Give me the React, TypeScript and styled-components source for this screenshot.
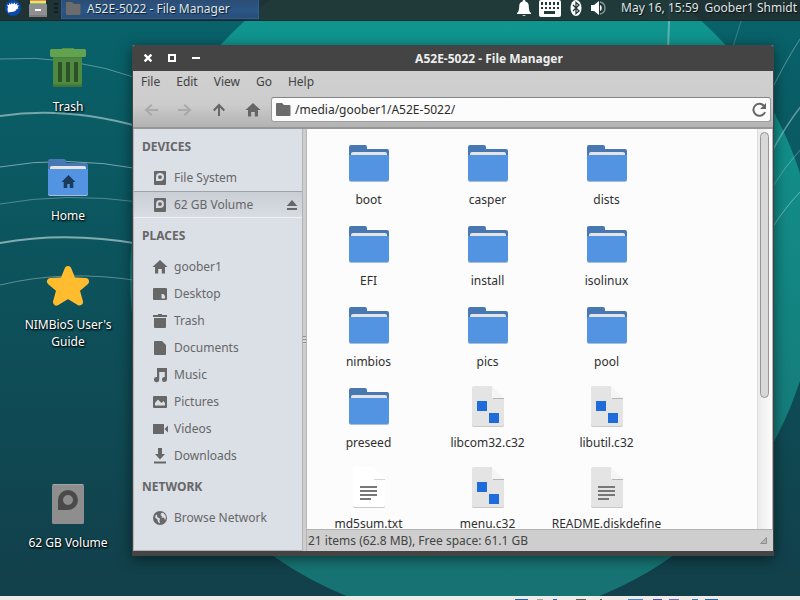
import React from "react";
import styled, { createGlobalStyle, css } from "styled-components";

const GlobalStyle = createGlobalStyle`
  * { box-sizing: border-box; }
  html, body, #root { height: 100%; }
  body {
    margin: 0;
    overflow: hidden;
    font: 12px/17px "Noto Sans", "Open Sans", sans-serif;
    color: #2f2f2f;
  }
  button, input {
    font: inherit;
    color: inherit;
    background: none;
    border: 0;
    padding: 0;
    margin: 0;
  }
  svg { display: block; flex: none; }
`;

const Screen = styled.div`
  position: relative;
  isolation: isolate;
  display: flex;
  flex-direction: column;
  height: 100vh;
  overflow: hidden;
`;

const WallpaperSvg = styled.svg`
  position: absolute;
  inset: 0;
  width: 100%;
  height: 100%;
  z-index: -1;
`;

/* ---------- top panel ---------- */

const Panel = styled.header`
  flex: none;
  display: flex;
  align-items: flex-start;
  height: 21px;
  padding: 0 3px 0 5px;
  background: rgba(36, 40, 42, 0.84);
  border-bottom: 1px solid rgba(20, 38, 42, 0.6);
  color: #dfe5e6;
  text-shadow: 1px 1px 1px rgba(0, 0, 0, 0.7);
`;

const PanelButton = styled.button`
  display: flex;
  margin-right: 8px;
`;

const PanelHandle = styled.span`
  width: 4px;
  height: 12px;
  margin: 3px 3px 0 -1px;
  background: repeating-linear-gradient(#141f22 0 2px, transparent 2px 4px);
`;

const TaskButton = styled.button`
  display: flex;
  align-items: center;
  gap: 6px;
  width: 198px;
  height: 19px;
  padding: 0 4px 2px;
  border: 1px solid #2e5c9c;
  border-top: 0;
  background: linear-gradient(#2c4d74, #2b5686 60%, #2a4e78);
  text-shadow: inherit;
`;

const Tray = styled.div`
  display: flex;
  gap: 8px;
  margin-left: auto;
  margin-right: 13px;
`;

const Clock = styled.time`
  margin-right: 6px;
  line-height: 15px;
`;

const UserName = styled.span`
  line-height: 15px;
`;

/* ---------- desktop ---------- */

const Desktop = styled.main`
  flex: 1;
  min-height: 0;
  display: grid;
  grid-template-columns: 132px minmax(0, 1fr);
  grid-template-rows: minmax(0, 1fr);
  padding: 24px 26px 40px 0;
`;

const DesktopIcons = styled.nav`
  display: grid;
  grid-auto-rows: 109px;
  align-content: start;
  margin-right: -4px;
`;

const DesktopIcon = styled.button<{ $row: number }>`
  grid-row: ${(p) => p.$row};
  display: flex;
  flex-direction: column;
  align-items: center;
  justify-content: flex-start;
  gap: 8px;
  padding: 1px 18px 0;
  color: #fff;
  text-shadow: 1px 1px 2px #000, 0 1px 2px rgba(0, 0, 0, 0.7);
`;

/* ---------- window ---------- */

const Window = styled.section`
  display: flex;
  flex-direction: column;
  min-height: 0;
  background: #cecece;
  border: 1px solid #444;
  border-width: 0 1px 5px;
  border-radius: 2px 2px 0 0;
  box-shadow: 0 3px 14px rgba(0, 0, 0, 0.5);
`;

const TitleBar = styled.header`
  flex: none;
  display: flex;
  align-items: center;
  height: 26px;
  padding-left: 3px;
  background: #444;
  border-radius: 2px 2px 0 0;
  color: #eee;
`;

const TitleButton = styled.button`
  display: flex;
  align-items: center;
  justify-content: center;
  width: 24px;
  height: 24px;
`;

const Title = styled.h1`
  flex: 1;
  margin: 0;
  padding-right: 3px;
  font-size: 12px;
  line-height: 17px;
  font-weight: 700;
  text-align: center;
`;

const Chrome = styled.div`
  flex: none;
  background: linear-gradient(#d0d0d0, #cccccc 60%, #b2b2b2);
  border-bottom: 2px solid #969696;
`;

const MenuBar = styled.nav`
  display: flex;
  height: 21px;
  color: #424242;
`;

const MenuItem = styled.button`
  padding: 0 8px;
`;

const ToolBar = styled.div`
  display: flex;
  align-items: center;
  height: 35px;
  padding: 0 2px 0 1px;
`;

const ToolButton = styled.button`
  display: flex;
  align-items: center;
  justify-content: center;
  width: 34px;
  height: 27px;
  color: #666;
  &:disabled { color: #a9a9a9; }
`;

const Location = styled.label`
  flex: 1;
  display: flex;
  align-items: center;
  gap: 4px;
  height: 25px;
  padding: 0 2px 0 4px;
  margin-left: 1px;
  border: 1px solid #9b9b9b;
  border-top-color: #858585;
  border-radius: 3px;
  background: #fcfcfc;
  color: #666;
  input {
    flex: 1;
    min-width: 0;
    color: #2c2c2c;
    outline: none;
  }
`;

const Body = styled.div`
  flex: 1;
  min-height: 0;
  display: flex;
`;

const Sidebar = styled.aside`
  flex: none;
  width: 170px;
  background: #dbdfe6;
  border: 1px solid #b0b2b5;
  border-top: 0;
  color: #676767;
  overflow: hidden;
`;

const SideHeading = styled.h2`
  margin: 0;
  padding: 0 8px;
  font-size: 12px;
  line-height: 35px;
  font-weight: 700;
`;

const SideList = styled.ul`
  margin: 0;
  padding: 0;
  list-style: none;
`;

const SideRow = styled.li<{ $selected?: boolean }>`
  display: flex;
  align-items: center;
  height: 27px;
  padding: 0 2px 0 18px;
  ${(p) =>
    p.$selected &&
    css`
      background: linear-gradient(#c9cdd4, #d8dce3);
      box-shadow: inset 0 1px #a0a3a8, inset 0 -1px #eef0f4;
    `}
`;

const SideButton = styled.button`
  flex: 1;
  display: flex;
  align-items: center;
  gap: 6px;
  text-align: left;
`;

const Splitter = styled.div`
  flex: none;
  display: flex;
  align-items: center;
  width: 4px;
  border-right: 1px solid #b5b5b5;
  span {
    width: 4px;
    height: 8px;
    background: repeating-linear-gradient(#909090 0 1px, #dadada 1px 3px);
  }
`;

const Content = styled.div`
  flex: 1;
  min-width: 0;
  display: flex;
  flex-direction: column;
`;

const Scroller = styled.div`
  flex: 1;
  min-height: 0;
  display: flex;
  background: #fcfcfc;
  border: 1px solid #b2b2b2;
  border-width: 0 1px 1px 0;
`;

const FileGrid = styled.div`
  flex: 1;
  display: grid;
  grid-template-columns: repeat(auto-fill, 119px);
  grid-auto-rows: 65px;
  row-gap: 16px;
  padding: 14px 0 0 2px;
  overflow: hidden;
`;

const FileItem = styled.button`
  display: flex;
  flex-direction: column;
  align-items: center;
  gap: 6px;
  white-space: nowrap;
`;

const Track = styled.div`
  flex: none;
  width: 15px;
  padding: 3px 3px 0 2px;
  border-left: 1px solid #dcdcdc;
  background: linear-gradient(90deg, #ebebeb, #fcfcfc);
`;

const Thumb = styled.div`
  height: 67%;
  border: 1px solid #969696;
  border-radius: 5px;
  background: #d8d8d8;
`;

const StatusBar = styled.footer`
  flex: none;
  display: flex;
  align-items: center;
  justify-content: space-between;
  height: 21px;
  padding: 0 6px 0 1px;
  color: #444;
`;

/* ---------- bottom strip ---------- */

const Strip = styled.footer`
  flex: none;
  display: flex;
  align-items: flex-end;
  justify-content: flex-end;
  height: 4px;
  padding-right: 82px;
  background: #efebe7;
`;

const StripMark = styled.span<{ $gap: number; $w: number; $c: string }>`
  margin-left: ${(p) => p.$gap}px;
  width: ${(p) => p.$w}px;
  height: 1px;
  background: ${(p) => p.$c};
`;

/* ---------- drawings ---------- */

const Wallpaper = () => (
  <WallpaperSvg viewBox="0 0 800 600" preserveAspectRatio="xMidYMid slice" aria-hidden="true">
    <defs>
      <linearGradient id="sea" x1="0" y1="0" x2="0" y2="1">
        <stop offset="0" stopColor="#08636b" />
        <stop offset="1" stopColor="#123f4a" />
      </linearGradient>
      <linearGradient id="disc" gradientUnits="userSpaceOnUse" x1="0" y1="0" x2="0" y2="600">
        <stop offset="0" stopColor="#109690" />
        <stop offset="1" stopColor="#177272" />
      </linearGradient>
    </defs>
    <rect width="800" height="600" fill="url(#sea)" />
    <circle cx="473" cy="277" r="343" fill="url(#disc)" />
    <g fill="none" stroke="#cfe6e6">
      <path d="M0 59Q70 54 140 79" opacity=".4" />
      <path d="M0 116Q66 106 140 127" strokeWidth="2" opacity=".55" />
      <path d="M0 167Q66 155 140 169" opacity=".55" />
      <path d="M0 204Q66 192 140 202" opacity=".35" />
      <path d="M0 243Q66 231 140 244" strokeWidth="2" opacity=".6" />
      <path d="M0 285Q66 269 140 281" opacity=".4" />
      <path d="M670 0Q669 22 668 50" strokeWidth="2" opacity=".4" />
      <path d="M749 0Q740 22 732 50" opacity=".25" />
      <path d="M802 36Q786 60 770 93" opacity=".4" />
      <path d="M802 105Q786 125 770 155" strokeWidth="1.5" opacity=".45" />
      <path d="M802 148Q786 165 770 191" opacity=".35" />
      <path d="M802 190Q786 206 770 231" opacity=".45" />
    </g>
  </WallpaperSvg>
);

const MouseLogo = () => (
  <svg width="16" height="17" viewBox="0 0 16 17">
    <circle cx="8" cy="8" r="8" fill="#0a49a8" />
    <path
      fill="#fff"
      d="M3 12.500L2.500 9 3 7 2 4.500l2 .8L4.300 3l1.600 1.600L6.800 2.500l1.200 2L9.500 2.300l.7 2.200L12.500 3l-.5 2.200 2 .3-1.200 1.700.6 1.300-1.600.6C11 11 9 12 6 12z"
    />
  </svg>
);

const CabinetIcon = () => (
  <svg width="18" height="17" viewBox="0 0 18 17">
    <path fill="#e88b52" d="M1 0h16v1H1z" />
    <path fill="#f5de6c" d="M1 1h16v2H1z" />
    <path fill="#7cc576" d="M1 3h16v2H1z" />
    <rect y="4" width="18" height="13" rx="1" fill="#8f8f8f" />
    <path fill="#7d7d7d" d="M0 15h18v2H0z" />
    <rect x="6" y="9" width="6" height="2" fill="#fff" />
  </svg>
);

const SmallFolder = () => (
  <svg width="15" height="13" viewBox="0 0 15 13" fill="#6c6c6c">
    <path d="M1 0h5l2 2h5.500a1 1 0 0 1 1 1v9a1 1 0 0 1-1 1H1a1 1 0 0 1-1-1V1a1 1 0 0 1 1-1z" />
  </svg>
);

const BellIcon = () => (
  <svg width="14" height="17" viewBox="2 0 14 17" fill="#fff">
    <path d="M9 0c1 0 1.500.6 1.500 1.400C13 2 13.800 4 13.800 6.500c0 4 1 5.500 2.200 6.500v1H2v-1c1.200-1 2.200-2.500 2.200-6.500C4.200 4 5 2 7.500 1.400 7.500.6 8 0 9 0zM7 15h4l-2 1z" />
  </svg>
);

const KeyboardIcon = () => (
  <svg width="22" height="17" viewBox="0 0 22 17">
    <rect width="22" height="17" rx="2" fill="#fff" />
    <g fill="#203a3c">
      {[0, 1, 2, 3, 4].map((c) => (
        <path key={c} d={`M${2 + c * 4} 2h2v3h-2zM${2 + c * 4} 7h2v2h-2z`} />
      ))}
      <path d="M5 11h11v3H5z" />
    </g>
  </svg>
);

const BluetoothIcon = () => (
  <svg width="14" height="17" viewBox="5 0 14 17">
    <ellipse cx="12" cy="8" rx="5.500" ry="8" fill="#fff" />
    <path d="M9 5l6 6-3 2.500v-11L15 5l-6 6" fill="none" stroke="#203a3c" strokeWidth="1.300" />
  </svg>
);

const VolumeIcon = () => (
  <svg width="17" height="17" viewBox="0 0 17 17">
    <path fill="#fff" d="M0 5h3l5-4v14l-5-4H0zM9 5c2.300.6 2.300 5.400 0 6z" />
    <path d="M9 2q5 1 5 6t-5 6" fill="none" stroke="#829395" strokeWidth="1.400" />
  </svg>
);

const TrashCan = () => (
  <svg width="40" height="44" viewBox="1 0 40 44">
    <path d="M6 10h29v29a2 2 0 0 1-2 2H8a2 2 0 0 1-2-2z" fill="#4f8a41" />
    <path d="M6 11h29" stroke="#447838" />
    <path d="M6 38.500h29V40a1 1 0 0 1-1 1H7a1 1 0 0 1-1-1z" fill="#41733a" />
    <path d="M15 2h12v2H15z" fill="#558b47" />
    <rect x="3" y="3" width="36" height="8" rx="1.500" fill="#62a352" />
    <g fill="#2d5026">
      <rect x="11" y="16" width="4" height="20" rx="1" />
      <rect x="19" y="16" width="4" height="20" rx="1" />
      <rect x="27" y="16" width="4" height="20" rx="1" />
    </g>
  </svg>
);

const FolderIcon = ({ home }: { home?: boolean }) => (
  <svg width="40" height={home ? 44 : 42} viewBox={home ? "0 -2 40 44" : "0 0 40 42"}>
    <path d="M0 4a2 2 0 0 1 2-2h14a2 2 0 0 1 2 2v2h20a2 2 0 0 1 2 2v12H0z" fill="#4878b4" />
    <path d="M2 13v-2a2 2 0 0 1 2-2h32a2 2 0 0 1 2 2v2z" fill="#e4e4e4" />
    <path d="M0 12h40v25a2 2 0 0 1-2 2H2a2 2 0 0 1-2-2z" fill="#a7bcd8" />
    <path d="M0 12h40v24a2 2 0 0 1-2 2H2a2 2 0 0 1-2-2z" fill="#5294e2" />
    {home && <path fill="#1c3a5c" d="M20.500 18l7 7h-2.200v6h-3.500v-4h-2.600v4h-3.500v-6h-2.200z" />}
  </svg>
);

const StarIcon = () => (
  <svg width="44" height="44" viewBox="0 0 44 44">
    <path
      fill="#ffbc2f"
      stroke="#ffbc2f"
      strokeWidth="7"
      strokeLinejoin="round"
      d="M22 5.500l4.500 11.300 13 .7-9.500 8 3.500 12.500L22 31l-11.500 7L14 25.500l-9.500-8 13-.7z"
    />
  </svg>
);

const DriveIcon = () => (
  <svg width="32" height="44" viewBox="0 0 32 44">
    <rect y="2" width="32" height="40" rx="1.500" fill="#8e8e8e" />
    <path d="M1 2.500h30" stroke="#a4a4a4" />
    <path
      fill="#4a4a4a"
      fillRule="evenodd"
      d="M16 8a10 10 0 0 1 0 20H6V18A10 10 0 0 1 16 8zm0 5a5 5 0 1 0 0 10 5 5 0 0 0 0-10z"
    />
  </svg>
);

const DocumentIcon = ({ kind }: { kind: "binary" | "text" | "data" }) => (
  <svg width="32" height="42" viewBox="0 0 32 42">
    <path d="M2 1h18v12h12v26a2 2 0 0 1-2 2H2a2 2 0 0 1-2-2V3a2 2 0 0 1 2-2z" fill="#c9c9c9" />
    <path
      d="M2 0h18v12h12v26a2 2 0 0 1-2 2H2a2 2 0 0 1-2-2V2a2 2 0 0 1 2-2z"
      fill={kind === "text" ? "#fff" : "#e4e4e4"}
    />
    <path d="M20 0l12 12H20z" fill={kind === "text" ? "#fff" : "#f5f5f5"} />
    <path d="M21 12.500h11" stroke={kind === "text" ? "#d6d6d6" : "#b4b4b4"} />
    {kind === "binary" ? (
      <path fill="#1e6bdc" d="M5 15h10v10H5zM17 27h10v10H17z" />
    ) : (
      <path fill="#77777a" d="M7 19h17v2H7zM7 23h17v2H7zM7 27h17v2H7zM7 31h11v2H7z" />
    )}
  </svg>
);

const glyphs = {
  back: "M8 2l1.500 1.500L5.500 7H15v2H5.500l4 3.500L8 14 1.500 8z",
  forward: "M8 2L6.500 3.500l4 3.500H1v2h9.500l-4 3.500L8 14l6.500-6z",
  up: "M8 1.500l6 6.300-1.500 1.400L9 5.800V14H7V5.800L3.500 9.200 2 7.800z",
  house: "M8 1l7.500 7H13v6.500H9.800V10H6.200v4.500H3V8H.5z",
  drive:
    "M3 1h10a1 1 0 0 1 1 1v12a1 1 0 0 1-1 1H3a1 1 0 0 1-1-1V2a1 1 0 0 1 1-1zm5 2a4 4 0 0 0-4 4v4h4a4 4 0 0 0 0-8zm0 2.200a1.900 1.900 0 1 1 0 3.800 1.900 1.900 0 0 1 0-3.800z",
  desktop:
    "M2 2h12a1 1 0 0 1 1 1v10a1 1 0 0 1-1 1H2a1 1 0 0 1-1-1V3a1 1 0 0 1 1-1zm7.500 6v4.500H13V10l-1.500-2z",
  trash: "M6 1h4v1h5v2H1V2h5zM2 5h12v9a1 1 0 0 1-1 1H3a1 1 0 0 1-1-1z",
  document: "M3 1h7l4 4v9a1 1 0 0 1-1 1H3a1 1 0 0 1-1-1V2a1 1 0 0 1 1-1z",
  music: "M5 1h10v11.500A2.500 2.500 0 1 1 12.800 10V5H7.200v7.500A2.600 2.600 0 1 1 5 10z",
  picture:
    "M2 2h12a1 1 0 0 1 1 1v10a1 1 0 0 1-1 1H2a1 1 0 0 1-1-1V3a1 1 0 0 1 1-1zm1 9.500h10V9.200L11.500 7 9.500 9 6 5.500 3 9z",
  video: "M1.500 3h10a.5.5 0 0 1 .5.5v9a.5.5 0 0 1-.5.5h-10a.5.5 0 0 1-.5-.5v-9a.5.5 0 0 1 .5-.5zM16 4.500v7L12.500 8z",
  download: "M6 0h4v6h3l-5 5.500L3 6h3zM2 13.500h12v2H2z",
  globe:
    "M8 1a7 7 0 1 1 0 14A7 7 0 0 1 8 1zM4 4.500l1.500 1L5 7l3 1.500-.5 2 .5 3-2-1.500-.5-2.500L3 7.500zM9.500 2.700L8.500 5l1.700 1.500L9.500 8l2.500-.5 1 2.500 1-2-.5-2.500-2-2.500z",
  eject: "M8 3l5.300 6H2.700zM3 11h10v2H3z",
};

type GlyphName = keyof typeof glyphs;

const Glyph = ({ name }: { name: GlyphName }) => (
  <svg width="16" height="16" viewBox="0 0 16 16" fill="currentColor" fillRule="evenodd" aria-hidden="true">
    <path d={glyphs[name]} />
  </svg>
);

const ReloadIcon = () => (
  <svg width="18" height="18" viewBox="0 0 18 18">
    <path d="M14.400 5.500A6 6 0 1 0 15 11" fill="none" stroke="#666" strokeWidth="2" />
    <path d="M16 2v6h-6z" fill="#666" />
  </svg>
);

/* ---------- data ---------- */

const places: { heading: string; rows: { icon: GlyphName; label: string; mounted?: boolean }[] }[] = [
  {
    heading: "DEVICES",
    rows: [
      { icon: "drive", label: "File System" },
      { icon: "drive", label: "62 GB Volume", mounted: true },
    ],
  },
  {
    heading: "PLACES",
    rows: [
      { icon: "house", label: "goober1" },
      { icon: "desktop", label: "Desktop" },
      { icon: "trash", label: "Trash" },
      { icon: "document", label: "Documents" },
      { icon: "music", label: "Music" },
      { icon: "picture", label: "Pictures" },
      { icon: "video", label: "Videos" },
      { icon: "download", label: "Downloads" },
    ],
  },
  { heading: "NETWORK", rows: [{ icon: "globe", label: "Browse Network" }] },
];

const folder = <FolderIcon />;
const binary = <DocumentIcon kind="binary" />;

const files: [string, React.ReactNode][] = [
  ["boot", folder],
  ["casper", folder],
  ["dists", folder],
  ["EFI", folder],
  ["install", folder],
  ["isolinux", folder],
  ["nimbios", folder],
  ["pics", folder],
  ["pool", folder],
  ["preseed", folder],
  ["libcom32.c32", binary],
  ["libutil.c32", binary],
  ["md5sum.txt", <DocumentIcon kind="text" />],
  ["menu.c32", binary],
  ["README.diskdefine", <DocumentIcon kind="data" />],
];

const marks: [number, number, string][] = [
  [0, 13, "#1c66b8"],
  [9, 6, "#a9a6a3"],
  [10, 4, "#1c66b8"],
  [19, 10, "#5e5e5e"],
  [14, 2, "#5e5e5e"],
  [26, 15, "#4a86d8"],
  [10, 9, "#4a50b0"],
  [7, 10, "#7a68b0"],
  [13, 6, "#3878c0"],
  [7, 13, "#1c66b8"],
];

export default function App() {
  return (
    <Screen>
      <GlobalStyle />
      <Wallpaper />
      <Panel>
        <PanelButton aria-label="Applications"><MouseLogo /></PanelButton>
        <PanelButton aria-label="Files"><CabinetIcon /></PanelButton>
        <PanelHandle />
        <TaskButton><SmallFolder />A52E-5022 - File Manager</TaskButton>
        <Tray>
          <BellIcon />
          <KeyboardIcon />
          <BluetoothIcon />
          <VolumeIcon />
        </Tray>
        <Clock>May 16, 15:59</Clock>
        <UserName>Goober1 Shmidt</UserName>
      </Panel>
      <Desktop>
        <DesktopIcons aria-label="Desktop">
          <DesktopIcon $row={1}><TrashCan />Trash</DesktopIcon>
          <DesktopIcon $row={2}><FolderIcon home />Home</DesktopIcon>
          <DesktopIcon $row={3}><StarIcon />NIMBioS User's Guide</DesktopIcon>
          <DesktopIcon $row={5}><DriveIcon />62 GB Volume</DesktopIcon>
        </DesktopIcons>
        <Window>
          <TitleBar>
            <TitleButton aria-label="Close">
              <svg width="8" height="8" viewBox="0 0 8 8"><path d="M.6.6l6.800 6.800M7.400.6L.6 7.400" stroke="#fff" strokeWidth="2.400" /></svg>
            </TitleButton>
            <TitleButton aria-label="Maximize">
              <svg width="8" height="8" viewBox="0 0 8 8"><path d="M1 1h6v6H1z" fill="none" stroke="#fff" strokeWidth="2" /></svg>
            </TitleButton>
            <TitleButton aria-label="Minimize">
              <svg width="8" height="8" viewBox="0 0 8 8"><path d="M0 3h8v2H0z" fill="#fff" /></svg>
            </TitleButton>
            <Title>A52E-5022 - File Manager</Title>
          </TitleBar>
          <Chrome>
            <MenuBar>
              {["File", "Edit", "View", "Go", "Help"].map((m) => (
                <MenuItem key={m}>{m}</MenuItem>
              ))}
            </MenuBar>
            <ToolBar>
              <ToolButton disabled aria-label="Back"><Glyph name="back" /></ToolButton>
              <ToolButton disabled aria-label="Forward"><Glyph name="forward" /></ToolButton>
              <ToolButton aria-label="Up"><Glyph name="up" /></ToolButton>
              <ToolButton aria-label="Home"><Glyph name="house" /></ToolButton>
              <Location>
                <SmallFolder />
                <input aria-label="Location" defaultValue="/media/goober1/A52E-5022/" />
                <button aria-label="Reload"><ReloadIcon /></button>
              </Location>
            </ToolBar>
          </Chrome>
          <Body>
            <Sidebar>
              {places.map((group) => (
                <React.Fragment key={group.heading}>
                  <SideHeading>{group.heading}</SideHeading>
                  <SideList>
                    {group.rows.map((row) => (
                      <SideRow key={row.label} $selected={row.mounted}>
                        <SideButton><Glyph name={row.icon} />{row.label}</SideButton>
                        {row.mounted && <button aria-label="Eject"><Glyph name="eject" /></button>}
                      </SideRow>
                    ))}
                  </SideList>
                </React.Fragment>
              ))}
            </Sidebar>
            <Splitter><span /></Splitter>
            <Content>
              <Scroller>
                <FileGrid>
                  {files.map(([name, icon]) => (
                    <FileItem key={name}>{icon}{name}</FileItem>
                  ))}
                </FileGrid>
                <Track><Thumb /></Track>
              </Scroller>
              <StatusBar>
                21 items (62.8 MB), Free space: 61.1 GB
                <svg width="7" height="7" viewBox="0 0 7 7"><path d="M6.500.5v6h-6z" fill="#b4b4b4" stroke="#8f8f8f" /></svg>
              </StatusBar>
            </Content>
          </Body>
        </Window>
      </Desktop>
      <Strip>
        {marks.map(([gap, w, c], i) => (
          <StripMark key={i} $gap={gap} $w={w} $c={c} />
        ))}
      </Strip>
    </Screen>
  );
}
